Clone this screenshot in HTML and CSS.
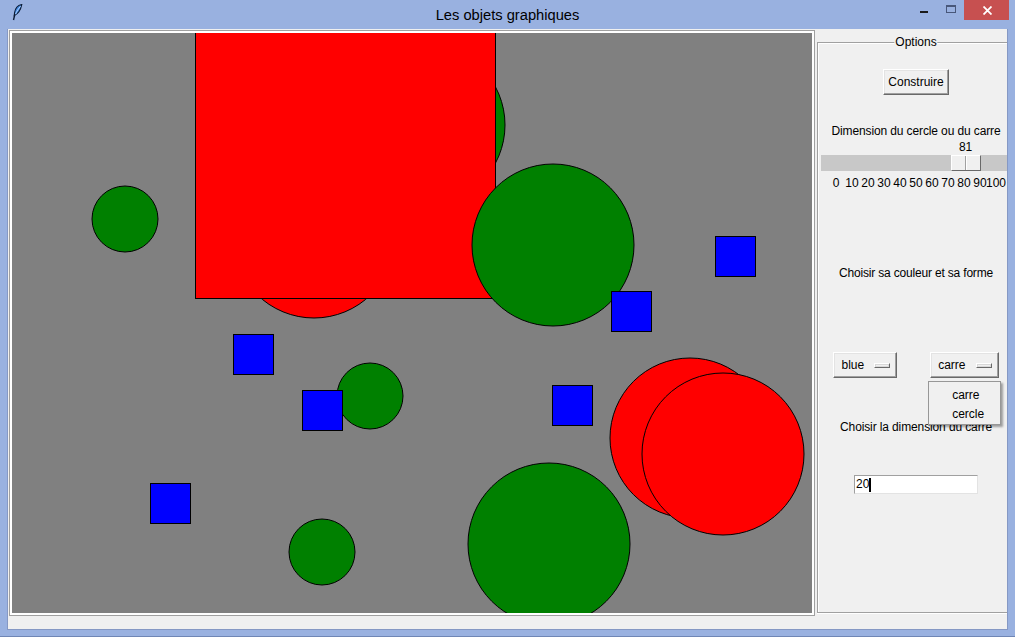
FILE: index.html
```html
<!DOCTYPE html>
<html lang="fr">
<head>
<meta charset="utf-8">
<title>Les objets graphiques</title>
<link rel="stylesheet" href="styles.css">
</head>
<body>
<div class="window">
  <div class="titlebar">
    <svg class="app-icon" width="11" height="17" viewBox="0 0 11 17">
      <path d="M9.8 0.5 C6.4 1 3.4 3.8 2.6 8.6 L2.2 11.6 C5.4 10.2 8.6 6.6 9.8 0.5 Z" fill="#3f86e0" stroke="#0b1a33" stroke-width="1.1"/>
      <path d="M8.6 2.2 C6.6 4.4 4.8 7.2 3.4 10.4" fill="none" stroke="#bcd8fb" stroke-width="0.9"/>
      <path d="M2.9 10.2 L1.5 16" fill="none" stroke="#0b1a33" stroke-width="1.4"/>
    </svg>
    <div class="title">Les objets graphiques</div>
    <div class="controls">
      <div class="ctl ctl-min"><span class="min-bar"></span></div>
      <div class="ctl ctl-max"><span class="max-box"></span></div>
      <div class="ctl ctl-close">
        <svg width="9" height="9" viewBox="0 0 9 9"><path d="M0.5 0.5 L8.5 8.5 M8.5 0.5 L0.5 8.5" stroke="#fff" stroke-width="1.8"/></svg>
      </div>
    </div>
  </div>
  <div class="client">
    <div class="main">
      <div class="canvas-frame">
        <svg class="canvas" width="800" height="580" viewBox="0 0 800 580">
          <rect x="0" y="0" width="800" height="580" fill="#808080"/>
          <circle cx="412" cy="92" r="81" fill="#008000" stroke="#000" stroke-width="1"/>
          <circle cx="302" cy="204" r="81" fill="#ff0000" stroke="#000" stroke-width="1"/>
          <rect x="183.5" y="-34.5" width="300" height="300" fill="#ff0000" stroke="#000" stroke-width="1"/>
          <circle cx="113" cy="186" r="33" fill="#008000" stroke="#000" stroke-width="1"/>
          <circle cx="541" cy="212" r="81" fill="#008000" stroke="#000" stroke-width="1"/>
          <circle cx="358" cy="363" r="33" fill="#008000" stroke="#000" stroke-width="1"/>
          <circle cx="310" cy="519" r="33" fill="#008000" stroke="#000" stroke-width="1"/>
          <circle cx="537" cy="511" r="81" fill="#008000" stroke="#000" stroke-width="1"/>
          <circle cx="678" cy="405" r="80" fill="#ff0000" stroke="#000" stroke-width="1"/>
          <circle cx="711" cy="421" r="81" fill="#ff0000" stroke="#000" stroke-width="1"/>
          <rect x="703.5" y="203.5" width="40" height="40" fill="#0000ff" stroke="#000" stroke-width="1"/>
          <rect x="599.5" y="258.5" width="40" height="40" fill="#0000ff" stroke="#000" stroke-width="1"/>
          <rect x="221.5" y="301.5" width="40" height="40" fill="#0000ff" stroke="#000" stroke-width="1"/>
          <rect x="290.5" y="357.5" width="40" height="40" fill="#0000ff" stroke="#000" stroke-width="1"/>
          <rect x="540.5" y="352.5" width="40" height="40" fill="#0000ff" stroke="#000" stroke-width="1"/>
          <rect x="138.5" y="450.5" width="40" height="40" fill="#0000ff" stroke="#000" stroke-width="1"/>
        </svg>
      </div>
      <div class="panel">
        <div class="lf">
          <span class="lf-label">Options</span>
          <div class="btn">Construire</div>
          <div class="lbl lbl-dim">Dimension du cercle ou du carre</div>
          <div class="scale">
            <div class="scale-value"><span class="value-text" style="margin-left:129.6px">81</span></div>
            <div class="trough"><div class="handle" style="margin-left:129.6px"></div></div>
            <div class="ticks">
              <span>0</span><span>10</span><span>20</span><span>30</span><span>40</span><span>50</span><span>60</span><span>70</span><span>80</span><span>90</span><span>100</span>
            </div>
          </div>
          <div class="lbl lbl-color">Choisir sa couleur et sa forme</div>
          <div class="opts">
            <div class="optmenu"><span>blue</span><span class="ind"></span></div>
            <div class="opt-wrap">
              <div class="optmenu"><span>carre</span><span class="ind"></span></div>
              <div class="popup">
                <div class="item">carre</div>
                <div class="item">cercle</div>
              </div>
            </div>
          </div>
          <div class="lbl lbl-size">Choisir la dimension du carre</div>
          <div class="entry"><span>20</span><span class="caret"></span></div>
        </div>
      </div>
    </div>
  </div>
</div>
</body>
</html>
```
FILE: styles.css
```css
html, body {
  margin: 0;
  padding: 0;
}
body {
  width: 1015px;
  height: 637px;
  overflow: hidden;
  font-family: "Liberation Sans", Arial, sans-serif;
  font-size: 12px;
  color: #000;
  background: #99b1e0;
}
.window {
  width: 1015px;
  height: 637px;
  display: flex;
  flex-direction: column;
  background: #99b1e0;
  box-shadow: inset 0 -1px 0 #6f86b5;
}
.titlebar {
  height: 29px;
  flex: none;
  display: grid;
  grid-template-columns: 1fr auto 1fr;
  align-items: start;
}
.app-icon {
  display: block;
  margin: 4px 0 0 12px;
}
.title {
  font-size: 14.7px;
  line-height: 30px;
  color: #000;
  white-space: nowrap;
}
.controls {
  justify-self: end;
  display: flex;
}
.ctl {
  width: 26px;
  height: 20px;
  display: flex;
  justify-content: center;
  align-items: flex-start;
  box-sizing: border-box;
}
.ctl-min {
  padding-top: 11px;
}
.min-bar {
  display: block;
  width: 8px;
  height: 2px;
  margin-left: -2px;
  background: #1a1a1a;
}
.ctl-max {
  padding-top: 5px;
}
.max-box {
  display: block;
  width: 10px;
  height: 8px;
  box-sizing: border-box;
  border: 1px solid #48577a;
  border-top-width: 2px;
}
.ctl-close {
  width: 45px;
  margin-right: 6px;
  background: #c75050;
  align-items: center;
}
.ctl-close svg {
  display: block;
  margin-left: 1px;
}
.client {
  flex: 1;
  margin: 0 7px 7px 7px;
  background: #f0f0f0;
  border: 1px solid #8598c4;
  border-top: none;
  display: flex;
  flex-direction: column;
}
.main {
  display: flex;
  height: 600px;
}
.canvas-frame {
  align-self: flex-start;
  margin: 1px 0 0 1px;
  border: 1px solid #a0a0a0;
  padding: 2px;
  background: #ffffff;
}
.canvas {
  display: block;
}
.panel {
  flex: 1;
  min-width: 0;
  overflow: hidden;
  display: flex;
  flex-direction: column;
}
.lf {
  flex: 1;
  flex-shrink: 0;
  width: 198px;
  margin: 13px 0 16px 2px;
  box-sizing: border-box;
  border: 1px solid #a0a0a0;
  box-shadow: inset 1px 1px 0 #ffffff, 0 1px 0 #ffffff;
  position: relative;
  display: flex;
  flex-direction: column;
  align-items: center;
}
.lf-label {
  position: absolute;
  top: -8px;
  left: 50%;
  transform: translateX(-50%);
  line-height: 15px;
  padding: 0 1px;
  background: #f0f0f0;
  white-space: nowrap;
}
.btn {
  margin-top: 26px;
  height: 26px;
  box-sizing: border-box;
  padding: 0 4px;
  line-height: 25px;
  border: 1px solid;
  border-color: #ffffff #696969 #696969 #ffffff;
  box-shadow: inset -1px -1px 0 #a0a0a0, inset 1px 1px 0 #e3e3e3;
  background: #f0f0f0;
  white-space: nowrap;
}
.lbl {
  line-height: 15px;
  white-space: nowrap;
  letter-spacing: -0.12px;
}
.lbl-dim {
  margin-top: 29px;
}
.scale {
  align-self: flex-start;
  margin: 1px 0 0 3px;
  width: 192px;
}
.scale-value {
  height: 15px;
  line-height: 15px;
  display: flex;
}
.value-text {
  display: block;
  width: 30px;
  text-align: center;
}
.trough {
  margin-top: 0;
  height: 16px;
  background: #c8c8c8;
  display: flex;
}
.handle {
  width: 30px;
  height: 16px;
  box-sizing: border-box;
  border: 1px solid;
  border-color: #ffffff #696969 #696969 #ffffff;
  background: #f0f0f0;
  position: relative;
}
.handle::after {
  content: "";
  position: absolute;
  top: 0;
  bottom: 0;
  left: 13px;
  width: 1px;
  background: #a0a0a0;
  box-shadow: 1px 0 0 #ffffff;
}
.ticks {
  margin-top: 5px;
  padding-left: 7px;
  display: grid;
  grid-template-columns: repeat(11, 16px);
  line-height: 15px;
}
.ticks span {
  display: flex;
  justify-content: center;
  white-space: nowrap;
}
.lbl-color {
  margin-top: 75px;
  letter-spacing: -0.18px;
}
.opts {
  margin-top: 71px;
  display: flex;
  gap: 33px;
}
.opt-wrap {
  position: relative;
}
.optmenu {
  height: 26px;
  box-sizing: border-box;
  display: flex;
  align-items: center;
  gap: 10px;
  padding: 0 6px 0 7px;
  border: 1px solid;
  border-color: #ffffff #696969 #696969 #ffffff;
  box-shadow: inset -1px -1px 0 #a0a0a0, inset 1px 1px 0 #e3e3e3;
  background: #f0f0f0;
}
.ind {
  display: block;
  width: 16px;
  height: 5px;
  box-sizing: border-box;
  border: 1px solid;
  border-color: #ffffff #696969 #696969 #ffffff;
  box-shadow: inset 0 0 0 1px #d8d8d8;
  background: #f0f0f0;
}
.popup {
  position: absolute;
  top: 29px;
  left: -2px;
  width: 73px;
  box-sizing: border-box;
  padding: 4px 0 0;
  border: 1px solid #979797;
  background: #f0f0f0;
  box-shadow: 2px 2px 2px rgba(0, 0, 0, 0.35);
  z-index: 2;
}
.item {
  height: 19px;
  line-height: 19px;
  padding-left: 23px;
}
.lbl-size {
  margin-top: 42px;
}
.entry {
  margin-top: 40px;
  width: 124px;
  height: 19px;
  box-sizing: border-box;
  border: 1px solid;
  border-color: #a0a0a0 #e3e3e3 #e3e3e3 #a0a0a0;
  background: #ffffff;
  display: flex;
  align-items: center;
  padding-left: 1px;
  line-height: 15px;
}
.caret {
  display: block;
  width: 2px;
  height: 14px;
  background: #000;
}
```
